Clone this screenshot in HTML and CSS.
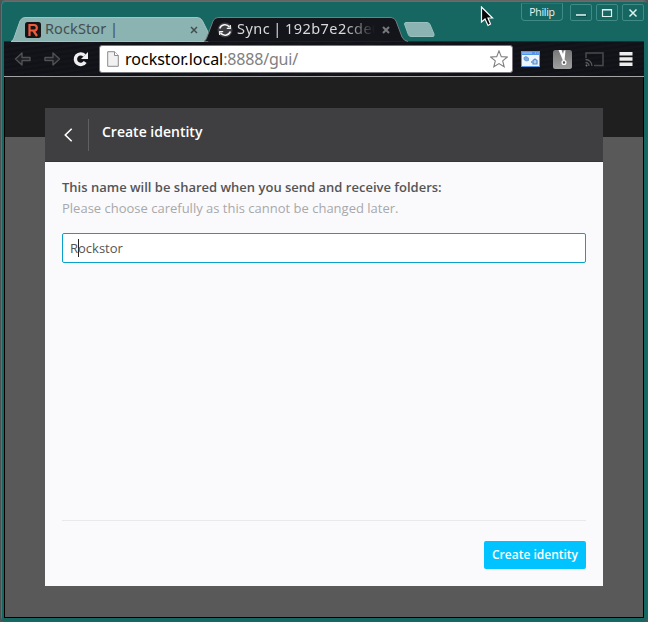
FILE: index.html
```html
<!DOCTYPE html>
<html lang="en">
<head>
<meta charset="utf-8">
<title>Sync</title>
<link rel="stylesheet" href="styles.css">
</head>
<body>
<div class="window">
  <header class="titlebar">
    <div class="tabs">
      <div class="tab tab-back">
        <svg class="tab-shape" width="198" height="25" viewBox="0 0 198 25"><path d="M0 24.5 Q2 24 3 21 L9 4 Q10.500 .5 14 .5 H186 Q190 .5 191.500 4 L197 15 V24.500Z" fill="#8ab3b1" stroke="#a3c4c2"/></svg>
        <svg class="favicon" width="16" height="16" viewBox="0 0 16 16"><rect width="16" height="16" rx="2.500" fill="#171415"/><path d="M4.500 14V3H9Q11.800 3 11.800 5.800T9 8.500H4.500M8.200 8.500L12 14" fill="none" stroke="#ef5a3c" stroke-width="2.200"/></svg>
        <span class="tab-title">RockStor |</span>
        <svg class="tab-close" width="8" height="8" viewBox="0 0 8 8"><path d="M1 1L7 7M7 1L1 7" stroke="#444e4f" stroke-width="1.500"/></svg>
      </div>
      <div class="tab tab-front">
        <svg class="tab-shape" width="205" height="25" viewBox="0 0 205 25"><path d="M0 24.500 Q2 23 3 20 L9 4 Q10.500 .5 14 .5 H187 Q190.500 .5 192 4 L198 20 Q200 24 204 24.500" fill="#14151a" stroke="#777b7d"/></svg>
        <svg class="favicon" width="16" height="16" viewBox="0 0 16 16"><circle cx="8" cy="8" r="7.500" fill="#3d3e41"/><path d="M2.700 6.500A5.500 5.500 0 0 1 12.500 5.200M13.300 9.500A5.500 5.500 0 0 1 3.500 10.800" fill="none" stroke="#f5f5f5" stroke-width="1.600"/><path d="M13.300 3V6.300H9.800M2.700 13V9.700H6.200" fill="none" stroke="#f5f5f5" stroke-width="1.200"/></svg>
        <span class="tab-title">Sync | 192b7e2cde0</span>
        <svg class="tab-close" width="8" height="8" viewBox="0 0 8 8"><path d="M1 1L7 7M7 1L1 7" stroke="#77797b" stroke-width="2"/></svg>
      </div>
      <svg class="new-tab" width="31" height="15" viewBox="0 0 31 15"><path d="M.5 2Q.5 .5 2 .5H23Q25 .5 26 2.500L30 12Q30.500 14.500 29 14.500H7Q5 14.500 4.300 12.500Z" fill="#8ab3b1" stroke="#9cc0bd"/></svg>
    </div>
    <svg class="pointer" width="14" height="21" viewBox="0 0 14 21"><path d="M1.500 1V16L5 13L8 19.500L10.500 18L8 12H12.500Z" fill="#090909" stroke="#fff" stroke-width="1.200"/></svg>
    <div class="controls">
      <span class="user">Philip</span>
      <span class="control"><svg width="12" height="12" viewBox="0 0 12 12"><path d="M1.500 8.500H11.500" stroke="#0a3835" stroke-width="2"/><path d="M1 8H11" stroke="#dcf3ef" stroke-width="1.600"/></svg></span>
      <span class="control"><svg width="12" height="12" viewBox="0 0 12 12"><path d="M1.500 2.500H10.500V9.500H1.500Z" fill="none" stroke="#dcf3ef" stroke-width="1.200"/><path d="M1 2.800H11" stroke="#dcf3ef" stroke-width="1.500"/></svg></span>
      <span class="control"><svg width="12" height="12" viewBox="0 0 12 12"><path d="M2.500 2.500L9.500 9.500M9.500 2.500L2.500 9.500" stroke="#dcf3ef" stroke-width="1.500"/></svg></span>
    </div>
  </header>
  <nav class="toolbar">
    <svg class="nav-icon" width="18" height="16" viewBox="0 0 18 16"><path d="M1.500 8L8 2V6.500H16V9.500H8V14Z" fill="#1d1e22" stroke="#505155" stroke-width="1.400" stroke-linejoin="round"/></svg>
    <svg class="nav-icon" width="18" height="16" viewBox="0 0 18 16"><path d="M16.500 8L10 2V6.500H2V9.500H10V14Z" fill="#1d1e22" stroke="#505155" stroke-width="1.400" stroke-linejoin="round"/></svg>
    <svg class="reload" width="17" height="17" viewBox="0 0 17 17"><path d="M12.500 4.500A5.300 5.300 0 1 0 13.200 11" fill="none" stroke="#efefef" stroke-width="3.400"/><path d="M16 1V8H9Z" fill="#efefef"/></svg>
    <div class="address">
      <svg class="page-icon" width="12" height="16" viewBox="0 0 12 16"><path d="M.7 .7H7.500L11.300 4.500V15.300H.7Z" fill="#f1f1f1" stroke="#8b8b8b"/><path d="M7.500 .7V4.500H11.300" fill="#fff" stroke="#8b8b8b"/></svg>
      <span class="url"><span class="host">rockstor.local</span>:8888/gui/</span>
      <svg class="star" width="18" height="18" viewBox="0 0 18 18"><path d="M9 .9L11.300 6.600L17.300 7L12.700 10.900L14.200 16.800L9 13.600L3.800 16.800L5.300 10.900L.7 7L6.700 6.600Z" fill="#fff" stroke="#808080" stroke-width="1.100"/></svg>
    </div>
    <div class="extensions">
      <svg width="19" height="16" viewBox="0 0 19 16"><path d="M0 0H19V16H0Z" fill="#5794e5"/><path d="M1 4H18V15H1Z" fill="#edf4fc"/><path d="M1 2H11M14 2H15M16.500 2H17.500" stroke="#accbf1"/><path d="M3 6.500L5 5.500L7.500 7V9.500L5 10L3 8.500Z" fill="#7facdf" stroke="#5489cd" stroke-width=".7"/><path d="M12 9.500L14 8L16 9.500V13H12Z" fill="#b6d2f3" stroke="#5489cd" stroke-width="1.200"/><path d="M10.800 10V12" stroke="#5489cd"/></svg>
      <svg width="19" height="19" viewBox="0 0 19 19"><defs><linearGradient id="g" x2="0" y2="1"><stop stop-color="#777"/><stop offset="1" stop-color="#a0a0a0"/></linearGradient></defs><rect width="19" height="19" rx="2.500" fill="url(#g)"/><path d="M5.500 0H8.500L10 4L10.800 .8L12.500 .3L11.500 11H10.200Z" fill="#fff"/><circle cx="11" cy="12.500" r="1.900" fill="#555" stroke="#fff" stroke-width="1.300"/></svg>
      <svg width="19" height="15" viewBox="0 0 19 15"><path d="M1 6V1H18V13.500H9" fill="none" stroke="#48494c" stroke-width="1.500"/><path d="M.5 7.500A6.500 6.500 0 0 1 7 14M.5 10.500A3.500 3.500 0 0 1 4 14" fill="none" stroke="#57585b" stroke-width="1.300"/><circle cx="1.500" cy="13.500" r="1" fill="#77787a"/></svg>
      <svg width="14" height="14" viewBox="0 0 14 14"><path d="M.5 0H13.500V3.500H.5ZM.5 5.200H13.500V8.700H.5ZM.5 10.400H13.500V13.900H.5Z" fill="#ededed"/></svg>
    </div>
  </nav>
  <main class="viewport">
    <section class="dialog">
      <header class="dialog-header">
        <svg class="back" width="9" height="14" viewBox="0 0 9 14"><path d="M7.700 .8L1.300 7L7.700 13.200" fill="none" stroke="#fff" stroke-width="1.600"/></svg>
        <h1>Create identity</h1>
      </header>
      <div class="dialog-body">
        <p class="lead">This name will be shared when you send and receive folders:</p>
        <p class="hint">Please choose carefully as this cannot be changed later.</p>
        <div class="field">R<span class="caret"></span>ockstor</div>
      </div>
      <footer><button>Create identity</button></footer>
    </section>
  </main>
</div>
</body>
</html>
```
FILE: styles.css
```css
* { box-sizing: border-box; }
body { margin: 0; background: #515555; font-family: "Open Sans", "Noto Sans", sans-serif; }
svg { display: block; flex: none; }
.window {
  width: 648px; height: 622px; padding: 0 3px 3px;
  border: 1px solid #4b5254; border-top-color: #656565; border-radius: 5px;
  background: #166661; box-shadow: inset 1px 1px #2c8780;
  display: flex; flex-direction: column;
}
.titlebar { height: 40px; display: flex; position: relative; flex: none; }
.tabs { display: flex; padding: 16px 0 0 7px; }
.tab { position: relative; height: 25px; display: flex; align-items: center; }
.tab-back { width: 193px; padding-left: 14px; }
.tab-front { width: 200px; padding-left: 13px; z-index: 1; }
.tab-shape { position: absolute; left: 0; top: 0; z-index: 0; }
.favicon, .tab-title, .tab-close { position: relative; }
.tab-title { margin-left: 4px; width: 142px; white-space: nowrap; font: 14.5px/22px "Noto Sans", sans-serif; letter-spacing: .1px; color: #454f50; }
.tab-close { margin-left: 3px; }
.tab-title { top: -2px; }
.tab-front .tab-title { width: 148px; letter-spacing: .45px; word-spacing: -1px; color: #d8dadd; -webkit-mask-image: linear-gradient(90deg, #000 108px, transparent 138px); mask-image: linear-gradient(90deg, #000 108px, transparent 138px); }
.tab-front .tab-close { margin-left: -3px; }
.new-tab { margin-top: 5px; }
.pointer { position: absolute; left: 476px; top: 5px; }
.controls { margin-left: auto; display: flex; gap: 4px; padding: 2px 0 0; }
.user, .control { border: 1px solid #408b85; height: 17px; border-radius: 2px; }
.user { width: 42px; height: 18px; margin: 0 3px 0 0; border-top-color: #2a7771; border-radius: 0 0 4px 4px; color: #f0f5f4; font: 10.5px/16px "Open Sans", sans-serif; text-align: center; letter-spacing: -.3px; }
.control { width: 22px; margin-top: 1px; display: flex; align-items: center; justify-content: center; }
.toolbar {
  height: 36px; flex: none; display: flex; align-items: center; padding: 2px 8px 1px 10px; border-bottom: 1px solid #a4a4a7;
  background: repeating-linear-gradient(172deg, #111217 0 2px, #14151a 3px 5px); box-shadow: inset 0 1px #2b2c31;
}
.nav-icon + .nav-icon { margin-left: 11px; }
.reload { margin-left: 11px; }
.address { margin-left: 10px; width: 414px; height: 28px; display: flex; align-items: center; background: #fff; border: 1px solid #77777b; border-radius: 3px; padding: 0 4px 0 7px; }
.url { margin-left: 6px; color: #808080; font: 16px/24px "Noto Sans", sans-serif; letter-spacing: -.2px; }
.host { color: #000; letter-spacing: 0; }
.star { margin-left: auto; }
.extensions { margin-left: 8px; display: flex; align-items: center; gap: 13px; }
.extensions svg:last-child { margin-left: 2px; }
.viewport { flex: 1; border: 1px solid #000; border-width: 0 1px 1px; background: linear-gradient(#1f1f1f 60px, #595959 60px); padding: 31px 40px 31px 40px; display: flex; }
.dialog { flex: 1; display: flex; flex-direction: column; background: #fafafd; }
.dialog-header { height: 54px; background: #3f3f41; border-bottom: 1px solid #353537; display: flex; align-items: center; padding-left: 19px; }
.dialog-header h1 { margin: 0 0 0 15px; padding: 0 0 6px 13px; height: 32px; border-left: 1px solid #606062; color: #fff; font-size: 14px; line-height: 26px; font-weight: 600; }
.dialog-body { padding: 15px 17px; flex: 1; }
.dialog-body p { margin: 0; font-size: 13px; line-height: 21px; }
.lead { color: #555; font-weight: 600; }
.dialog-body .hint { color: #a8a8aa; }
.field { margin-top: 14px; height: 30px; display: flex; border: 1px solid #09a0cc; border-radius: 2px; background: #fff; padding: 0 7px; color: #555; font-size: 13px; line-height: 28px; }
.caret { width: 1px; height: 18px; margin: 5px -1px 0 0; background: #222; }
footer { height: 66px; margin: 0 17px; border-top: 1px solid #e9e9eb; display: flex; justify-content: flex-end; align-items: flex-start; padding-top: 20px; }
footer button { width: 102px; height: 28px; padding: 0; border: 0; border-radius: 2px; background: #00c3ff; color: #fff; font: 600 12px/28px "Open Sans", sans-serif; }
```
